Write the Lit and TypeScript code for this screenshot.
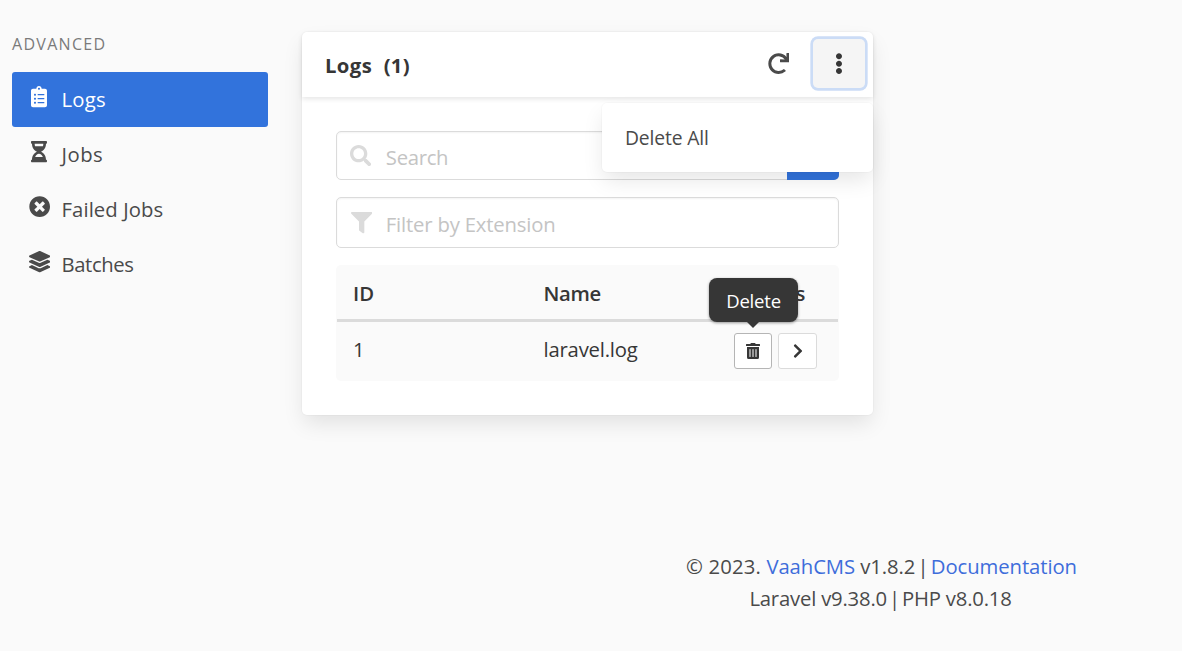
import { LitElement, html, css, svg } from "lit";
import { customElement } from "lit/decorators.js";

interface Glyph {
  w: number;
  d: string;
}

const ICONS: Record<string, Glyph> = {
  clipboard: {
    w: 384,
    d: "M336 64h-80c0-35.3-28.7-64-64-64s-64 28.7-64 64H48C21.5 64 0 85.5 0 112v352c0 26.5 21.5 48 48 48h288c26.5 0 48-21.5 48-48V112c0-26.5-21.5-48-48-48zM96 424c-13.3 0-24-10.7-24-24s10.7-24 24-24 24 10.7 24 24-10.7 24-24 24zm0-96c-13.3 0-24-10.7-24-24s10.7-24 24-24 24 10.7 24 24-10.7 24-24 24zm0-96c-13.3 0-24-10.7-24-24s10.7-24 24-24 24 10.7 24 24-10.7 24-24 24zm96-192c13.3 0 24 10.7 24 24s-10.7 24-24 24-24-10.7-24-24 10.7-24 24-24zm128 368c0 4.4-3.6 8-8 8H168c-4.4 0-8-3.6-8-8v-16c0-4.4 3.6-8 8-8h144c4.4 0 8 3.6 8 8v16zm0-96c0 4.4-3.6 8-8 8H168c-4.4 0-8-3.6-8-8v-16c0-4.4 3.6-8 8-8h144c4.4 0 8 3.6 8 8v16zm0-96c0 4.4-3.6 8-8 8H168c-4.4 0-8-3.6-8-8v-16c0-4.4 3.6-8 8-8h144c4.4 0 8 3.6 8 8v16z",
  },
  hourglass: {
    w: 384,
    d: "M360 0H24C10.745 0 0 10.745 0 24v16c0 13.255 10.745 24 24 24 0 90.965 51.016 167.734 120.842 192C75.016 280.266 24 357.035 24 448c-13.255 0-24 10.745-24 24v16c0 13.255 10.745 24 24 24h336c13.255 0 24-10.745 24-24v-16c0-13.255-10.745-24-24-24 0-90.965-51.016-167.734-120.842-192C308.984 231.734 360 154.965 360 64c13.255 0 24-10.745 24-24V24c0-13.255-10.745-24-24-24zm-75.078 384H99.08c17.059-46.797 52.096-80 92.92-80 40.821 0 75.862 33.196 92.922 80zm.019-256H99.078C91.988 108.548 88 86.748 88 64h208c0 22.805-3.987 44.587-11.059 64z",
  },
  failed: {
    w: 512,
    d: "M256 8C119 8 8 119 8 256s111 248 248 248 248-111 248-248S393 8 256 8zm121.6 313.1c4.7 4.7 4.7 12.3 0 17L338 377.6c-4.7 4.7-12.3 4.7-17 0L256 312l-65.1 65.6c-4.7 4.7-12.3 4.7-17 0L134.4 338c-4.7-4.7-4.7-12.3 0-17l65.6-65-65.6-65.1c-4.7-4.7-4.7-12.3 0-17l39.6-39.6c4.7-4.7 12.3-4.7 17 0l65 65.7 65.1-65.6c4.7-4.7 12.3-4.7 17 0l39.6 39.6c4.7 4.7 4.7 12.3 0 17L312 256l65.6 65.1z",
  },
  layers: {
    w: 512,
    d: "M12.41 148.02l232.94 105.67c6.8 3.09 14.49 3.09 21.29 0l232.94-105.67c16.55-7.51 16.55-32.52 0-40.03L266.65 2.31a25.607 25.607 0 0 0-21.29 0L12.41 107.98c-16.55 7.51-16.55 32.53 0 40.04zm487.18 88.28l-58.09-26.33-161.64 73.27c-7.56 3.43-15.59 5.17-23.86 5.17s-16.29-1.74-23.86-5.17L70.51 209.97l-58.1 26.33c-16.55 7.5-16.55 32.5 0 40l232.94 105.59c6.8 3.08 14.49 3.08 21.29 0L499.59 276.3c16.55-7.5 16.55-32.5 0-40zm0 127.8l-57.87-26.23-161.86 73.37c-7.56 3.43-15.59 5.17-23.86 5.17s-16.29-1.74-23.86-5.17L70.29 337.87 12.41 364.1c-16.55 7.5-16.55 32.5 0 40l232.94 105.59c6.8 3.08 14.49 3.08 21.29 0L499.59 404.1c16.55-7.5 16.55-32.5 0-40z",
  },
  search: {
    w: 512,
    d: "M505 442.7L405.3 343c-4.5-4.5-10.6-7-17-7H372c27.6-35.3 44-79.7 44-128C416 93.1 322.9 0 208 0S0 93.1 0 208s93.1 208 208 208c48.3 0 92.7-16.4 128-44v16.3c0 6.4 2.5 12.5 7 17l99.7 99.7c9.4 9.4 24.6 9.4 33.9 0l28.3-28.3c9.4-9.4 9.4-24.6.1-34zM208 336c-70.7 0-128-57.2-128-128 0-70.7 57.2-128 128-128 70.7 0 128 57.2 128 128 0 70.7-57.2 128-128 128z",
  },
  filter: {
    w: 512,
    d: "M487.976 0H24.028C2.71 0-8.047 25.866 7.058 40.971L192 225.941V432c0 7.831 3.821 15.17 10.237 19.662l80 55.98C298.02 518.69 320 507.493 320 487.98V225.941l184.947-184.97C520.021 25.896 509.338 0 487.976 0z",
  },
  redo: {
    w: 512,
    d: "M500.33 0h-47.41a12 12 0 0 0-12 12.57l4 82.76A247.42 247.42 0 0 0 256 8C119.34 8 7.9 119.53 8 256.19 8.1 393.07 119.1 504 256 504a247.1 247.1 0 0 0 166.18-63.91 12 12 0 0 0 .48-17.43l-34-34a12 12 0 0 0-16.38-.55A176 176 0 1 1 402.1 157.8l-101.53-4.87a12 12 0 0 0-12.57 12v47.41a12 12 0 0 0 12 12h200.33a12 12 0 0 0 12-12V12a12 12 0 0 0-12-12z",
  },
  more: {
    w: 192,
    d: "M96 184c39.8 0 72 32.2 72 72s-32.2 72-72 72-72-32.2-72-72 32.2-72 72-72zM24 80c0 39.8 32.2 72 72 72s72-32.2 72-72S135.8 8 96 8 24 40.2 24 80zm0 352c0 39.8 32.2 72 72 72s72-32.2 72-72-32.2-72-72-72-72 32.2-72 72z",
  },
  trash: {
    w: 448,
    d: "M32 464a48 48 0 0 0 48 48h288a48 48 0 0 0 48-48V128H32zm272-256a16 16 0 0 1 32 0v224a16 16 0 0 1-32 0zm-96 0a16 16 0 0 1 32 0v224a16 16 0 0 1-32 0zm-96 0a16 16 0 0 1 32 0v224a16 16 0 0 1-32 0zM432 32H312l-9.4-18.7A24 24 0 0 0 281.1 0H166.8a23.72 23.72 0 0 0-21.4 13.3L136 32H16A16 16 0 0 0 0 48v32a16 16 0 0 0 16 16h416a16 16 0 0 0 16-16V48a16 16 0 0 0-16-16z",
  },
  chevron: {
    w: 320,
    d: "M285.476 272.971L91.132 467.314c-9.373 9.373-24.569 9.373-33.941 0l-22.667-22.667c-9.357-9.357-9.375-24.522-.04-33.901L188.505 256 34.484 101.255c-9.335-9.379-9.317-24.544.04-33.901l22.667-22.667c9.373-9.373 24.569-9.373 33.941 0L285.475 239.03c9.373 9.372 9.373 24.568.001 33.941z",
  },
};

const icon = (name: string, size = 21.33) => {
  const g = ICONS[name];
  return html`<svg width=${(g.w / 512) * size} height=${size} viewBox="0 0 ${g.w} 512" fill="currentColor" aria-hidden="true">
    ${svg`<path d=${g.d}></path>`}
  </svg>`;
};

@customElement("side-menu")
class SideMenu extends LitElement {
  static styles = css`
    :host { display: block; width: 256px; }
    .label {
      font-size: 16px; line-height: 25px; letter-spacing: 1.3px;
      color: #7a7a7a; margin-bottom: 15px;
    }
    .item {
      display: flex; align-items: center; height: 55px; box-sizing: border-box;
      padding-left: 11px; border-radius: 3px; color: #4a4a4a; text-decoration: none;
    }
    .item.active { background: #3273dc; color: #fff; }
    .glyph { display: flex; justify-content: center; width: 32.7px; margin: 0 5.8px 5px 0; }
    .text { padding-bottom: 1px; }
    .logs { letter-spacing: 0.2px; }
    .jobs { letter-spacing: 0.5px; }
    .failed { letter-spacing: 0.1px; }
    .batches { letter-spacing: -0.4px; }
  `;
  render() {
    const items = [
      ["clipboard", "Logs", "logs", "active"],
      ["hourglass", "Jobs", "jobs", ""],
      ["failed", "Failed Jobs", "failed", ""],
      ["layers", "Batches", "batches", ""],
    ];
    return html`
      <div class="label">ADVANCED</div>
      <nav>
        ${items.map(
          ([g, text, cls, state]) => html`<a class="item ${state}">
            <span class="glyph">${icon(g)}</span><span class="text ${cls}">${text}</span>
          </a>`
        )}
      </nav>
    `;
  }
}

@customElement("logs-card")
class LogsCard extends LitElement {
  static styles = css`
    :host {
      display: block; width: 571px; height: 383px; background: #fff; border-radius: 5px;
      box-shadow: 0 10px 21px -2px rgba(10, 10, 10, 0.1), 0 0 0 1px rgba(10, 10, 10, 0.02);
    }
    .header {
      position: relative; display: flex; align-items: center; height: 65px; box-sizing: border-box;
      padding: 0 8px 2px 23px; box-shadow: 0 2px 5px rgba(10, 10, 10, 0.1);
      border-radius: 5px 5px 0 0; color: #363636;
    }
    .title { flex: 1; display: flex; gap: 11.5px; font-weight: 700; padding-top: 3px; }
    .title .name { letter-spacing: 0.4px; }
    .title .count { letter-spacing: 0.3px; }
    .tool { display: flex; align-items: center; justify-content: center; color: #4a4a4a; margin-right: 24px; }
    .more {
      display: flex; align-items: center; justify-content: center; width: 52px; height: 49px;
      background: #f5f5f5; border-radius: 5px; color: #363636;
      box-shadow: 0 0 0 2.67px #cbdcf6;
    }
    .dropdown {
      position: absolute; z-index: 3; right: 0; top: 71px; width: 271px; height: 69px; box-sizing: border-box;
      padding: 1px 0 0 23px; display: flex; align-items: center; background: #fff; border-radius: 5px;
      font-size: 19.3px; letter-spacing: -0.15px; color: #4a4a4a;
      box-shadow: 0 10px 21px -2px rgba(10, 10, 10, 0.1), 0 0 0 1px rgba(10, 10, 10, 0.02);
    }
    .body { padding: 34px 34px 0; }
    .field {
      display: flex; align-items: center; box-sizing: border-box; width: 503px; height: 49px;
      border: 1px solid #dbdbdb; border-radius: 5px; background: #fff; color: #dbdbdb;
      box-shadow: inset 0 1px 2px rgba(10, 10, 10, 0.05); padding-left: 13px; margin-bottom: 17px;
    }
    .field.select { height: 51px; padding-left: 14px; }
    .select svg { margin-top: 1px; }
    .hint { color: #c4c4c4; margin-left: 14.5px; padding-top: 2px; letter-spacing: -0.3px; }
    .select .hint { margin-left: 13.5px; letter-spacing: -0.18px; }
    .submit {
      margin: -1px -1px -1px auto; width: 52px; height: 49px; background: #3273dc;
      border-radius: 0 5px 5px 0;
    }
    .table { background: #fafafa; border-radius: 5px; color: #363636; height: 116px; }
    .row { display: grid; grid-template-columns: 190.5px 189.5px 1fr; padding-left: 17px; }
    .row.head { font-weight: 600; height: 54px; padding-top: 2px; box-sizing: border-box; align-items: center; }
    .head .title-name { letter-spacing: -0.3px; }
    .rule { height: 3px; background: #dbdbdb; margin: 0 1px; }
    .row.entry { height: 58px; align-items: center; }
    .entry .cell { padding-bottom: 5px; letter-spacing: -0.2px; }
    .actions { display: flex; gap: 6px; padding: 0 0 0 1px; }
    .btn {
      position: relative; display: flex; align-items: center; justify-content: center;
      width: 38px; height: 36px; box-sizing: border-box; background: #fff; color: #363636;
      border: 1px solid #dbdbdb; border-radius: 3px;
    }
    .btn.next { width: 39px; }
    .btn.hover { border-color: #b5b5b5; }
    .tip {
      position: absolute; z-index: 2; left: -26.5px; top: -56px; width: 89px; height: 44px; line-height: 45px;
      text-align: center; background: #363636; color: #fff; border-radius: 8px; font-size: 18.5px;
      letter-spacing: -0.2px; text-indent: 1px; box-shadow: 0 1px 3px rgba(0, 0, 0, 0.4);
    }
    .tip::after {
      content: ""; position: absolute; left: 38px; top: 43.5px; border: 6.5px solid transparent;
      border-top-color: #363636; border-bottom: 0;
    }
  `;
  render() {
    return html`
      <div class="header">
        <div class="title"><span class="name">Logs</span><span class="count">(1)</span></div>
        <span class="tool">${icon("redo")}</span>
        <span class="more">${icon("more")}</span>
        <div class="dropdown">Delete All</div>
      </div>
      <div class="body">
        <div class="field">${icon("search")}<span class="hint">Search</span><span class="submit"></span></div>
        <div class="field select">${icon("filter")}<span class="hint">Filter by Extension</span></div>
        <div class="table">
          <div class="row head"><span>ID</span><span class="title-name">Name</span><span>Actions</span></div>
          <div class="rule"></div>
          <div class="row entry">
            <span class="cell">1</span>
            <span class="cell">laravel.log</span>
            <span class="actions">
              <span class="btn hover">${icon("trash", 16)}<span class="tip">Delete</span></span>
              <span class="btn next">${icon("chevron", 16)}</span>
            </span>
          </div>
        </div>
      </div>
    `;
  }
}

@customElement("app-root")
class AppRoot extends LitElement {
  static styles = css`
    :host {
      display: flex; flex-direction: column; box-sizing: border-box; height: 651px; overflow: hidden;
      background: #fafafa; color: #4a4a4a; padding: 32px 0 0 12px;
      font: 400 20.3px/32px "Open Sans", "Noto Sans", sans-serif;
    }
    .columns { display: flex; gap: 34px; align-items: flex-start; }
    .footer { margin: 135px 0 0 569px; text-align: center; white-space: nowrap; }
    a { color: #3e6ddb; }
    .bar { word-spacing: -3px; }
    .line { letter-spacing: -0.08px; }
    .line.two { letter-spacing: -0.2px; margin-right: 2px; }
    .copy { letter-spacing: 0.15px; }
  `;
  render() {
    return html`
      <div class="columns"><side-menu></side-menu><logs-card></logs-card></div>
      <footer class="footer">
        <div class="line"><span class="copy">© 2023. </span><a>VaahCMS</a> v1.8.2<span class="bar"> | </span><a>Documentation</a></div>
        <div class="line two">Laravel v9.38.0<span class="bar"> | </span>PHP v8.0.18</div>
      </footer>
    `;
  }
}
